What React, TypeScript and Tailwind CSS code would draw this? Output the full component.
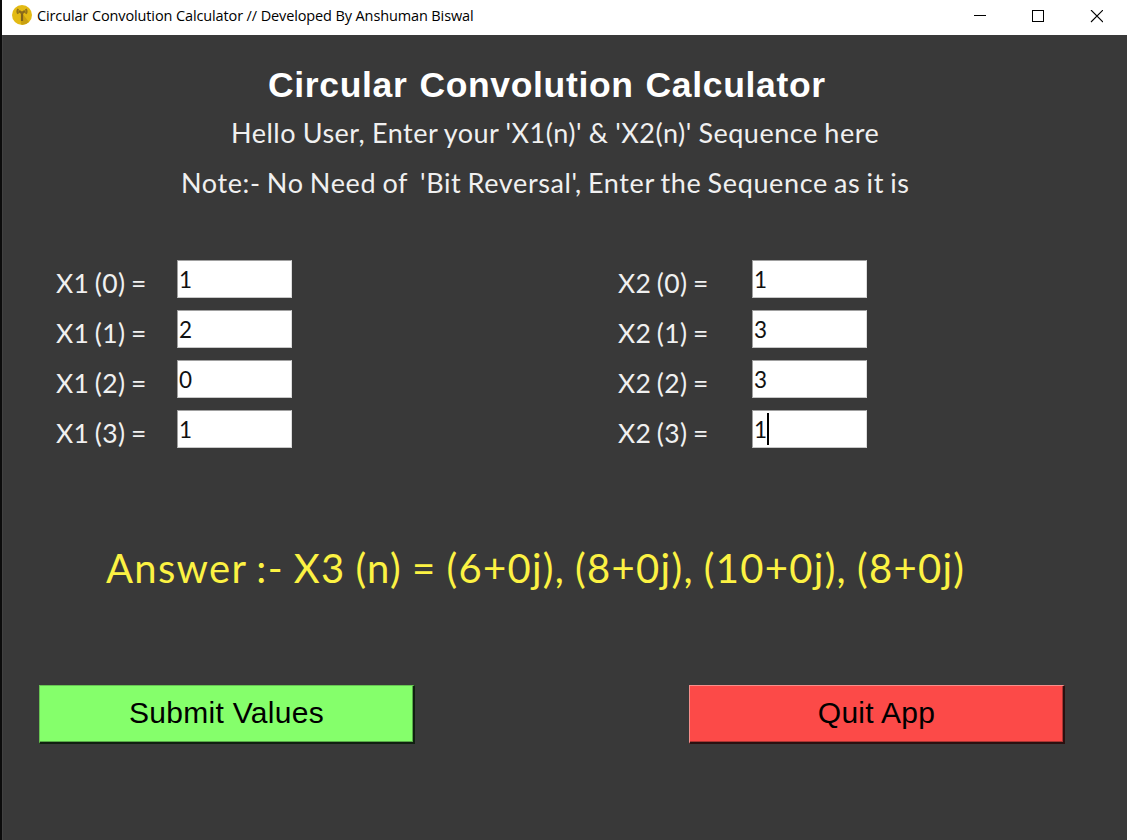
import React from "react";

const x1 = ["1", "2", "0", "1"];
const x2 = ["1", "3", "3", "1"];

function AppIcon() {
  return (
    <svg className="h-5 w-5" viewBox="0 0 20 20">
      <circle cx="10" cy="10" r="10" fill="#e3ba14" />
      <path d="M10 8 L17 17 Q14 20 10 19.8 Q9 19.8 8.8 17 Z" fill="#c9a010" />
      <path d="M10 7V16" stroke="#80621c" strokeWidth="2.2" />
      <path d="M6.2 4Q4.6 6.4 6.2 8.8M13.8 4Q15.4 6.4 13.8 8.8" stroke="#94741a" strokeWidth="2" fill="none" />
      <path d="M7 6L10 8L13 6" stroke="#8a6a1a" strokeWidth="2.4" fill="none" />
    </svg>
  );
}

function TitleBar() {
  return (
    <header className="flex h-[35px] shrink-0 items-start bg-white pl-[10px]">
      <div className="pt-[5px]">
        <AppIcon />
      </div>
      <h1 className="ml-[5px] whitespace-pre font-['Open_Sans',sans-serif] text-[14.5px] leading-[31px] tracking-[-0.12px] text-black">
        Circular Convolution Calculator // Developed By Anshuman Biswal
      </h1>
      <div className="ml-auto flex pr-6 pt-[10px]">
        <svg width="129" height="13" viewBox="0 0 129 13" fill="none" stroke="#000" shapeRendering="crispEdges">
          <path d="M0 5.5H12" />
          <path d="M58.5 .5H69.5V11.5H58.5Z" />
          <path d="M117 0L129 12M129 0L117 12" shapeRendering="auto" strokeWidth="1.1" />
        </svg>
      </div>
    </header>
  );
}

function Sequence({
  name,
  values,
  labelWidth,
  active,
}: {
  name: string;
  values: string[];
  labelWidth: string;
  active?: number;
}) {
  return (
    <div className="flex flex-col gap-3">
      {values.map((value, i) => (
        <div key={i} className="flex h-[38px]">
          <span
            className={`${labelWidth} whitespace-pre pt-[5px] font-[Lato,sans-serif] text-[26.5px] leading-9 tracking-[0.35px] text-[#f0f0f0] [word-spacing:-1.6px]`}
          >
            {name} ({i}) =
          </span>
          <div className="flex h-[38px] w-[115px] items-start border border-t-[#a0a0a0] border-l-[#a0a0a0] border-r-[#dcdcdc] border-b-[#c8c8c8] bg-white pl-[1px]">
            <span className="font-[Lato,sans-serif] text-[22.5px] leading-[37px] text-[#111]">{value}</span>
            {active === i && <span className="mt-[2px] h-8 w-[2px] bg-black" />}
          </div>
        </div>
      ))}
    </div>
  );
}

export default function App() {
  return (
    <div className="flex h-[840px] w-[1127px] flex-col overflow-hidden border-l-2 border-[#0c0c0c] bg-[#393939]">
      <TitleBar />
      <main className="flex flex-1 flex-col border-l border-[#424242]">
        <h2 className="mt-[30px] whitespace-pre pl-[265px] font-['Liberation_Sans',sans-serif] text-[35.5px] font-bold leading-[40px] tracking-[0.65px] text-white [word-spacing:1.5px]">
          Circular Convolution Calculator
        </h2>
        <p className="mt-[10px] whitespace-pre pl-[228px] font-[Lato,sans-serif] text-[27px] leading-9 tracking-[0.5px] text-[#f0f0f0] [word-spacing:-0.7px]">
          Hello User, Enter your 'X1(n)' & 'X2(n)' Sequence here
        </p>
        <p className="mt-[14px] whitespace-pre pl-[178px] font-[Lato,sans-serif] text-[27px] leading-9 tracking-[0.62px] text-[#f0f0f0] [word-spacing:-1.3px]">
          {"Note:- No Need of  'Bit Reversal', Enter the Sequence as it is"}
        </p>
        <div className="mt-[59px] flex gap-[326px] pl-[53px]">
          <Sequence name="X1" values={x1} labelWidth="w-[121px]" />
          <Sequence name="X2" values={x2} labelWidth="w-[134px]" active={3} />
        </div>
        <p className="mt-[92px] whitespace-pre pl-[103px] font-[Lato,sans-serif] text-[40px] leading-[56px] tracking-[1.3px] text-[#fcf243] [word-spacing:-1.6px]">
          Answer :- X3 (n) = (6+0j), (8+0j), (10+0j), (8+0j)
        </p>
        <div className="mt-[89px] flex gap-[274px] pl-9">
          <button className="h-[59px] w-[376px] border-2 border-t border-l border-t-[#68c454] border-l-[#68c454] border-r-[#102010] border-b-[#102010] bg-[#85ff6b] pb-[2px] font-['Liberation_Sans',sans-serif] text-[30px] leading-[54px] tracking-[0.3px] text-black shadow-[inset_-1px_-1px_0_#58aa48]">
            Submit Values
          </button>
          <button className="h-[59px] w-[376px] border-2 border-t border-l border-t-[#f78f8c] border-l-[#f78f8c] border-r-[#2a1010] border-b-[#2a1010] bg-[#fc4a48] pb-[2px] font-['Liberation_Sans',sans-serif] text-[30px] leading-[54px] tracking-[0.3px] text-black shadow-[inset_-1px_-1px_0_#aa3432]">
            Quit App
          </button>
        </div>
      </main>
    </div>
  );
}
